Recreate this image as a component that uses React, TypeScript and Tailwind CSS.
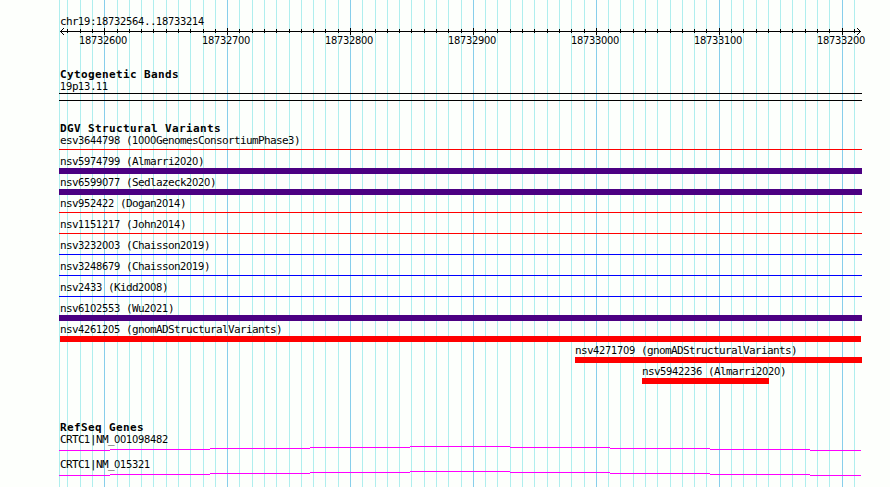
import React from "react";

const START = 18732564;
const END = 18733214;
const SCALE = 800 / 651;
const toX = (bp: number) => Math.round(60 + (bp - START) * SCALE);

const positions: number[] = [];
for (let bp = 18732570; bp <= END; bp += 10) positions.push(bp);
const isMajor = (bp: number) => bp % 100 === 0;

/** Fixed-pitch label: six pixels per character, digits in an undotted face. */
function Label({ text }: { text: string }) {
  return (
    <div className="h-3 whitespace-pre font-['DejaVu_Sans_Mono',monospace] text-[11px] leading-[14px] tracking-[-0.622px] text-black">
      {text.split(/(\d+)/).map((part, i) =>
        /\d/.test(part) ? (
          <span key={i} className="font-['DejaVu_Sans_Condensed','DejaVu_Sans',sans-serif] font-stretch-semi-condensed tracking-[-0.3px]">
            {part}
          </span>
        ) : (
          part
        ),
      )}
    </div>
  );
}

function Heading({ children }: { children: string }) {
  return (
    <h2 className="h-[13px] whitespace-pre pl-px font-['DejaVu_Sans_Mono',monospace] text-[11px] font-bold leading-[13px] tracking-[0.378px] text-black">
      {children}
    </h2>
  );
}

function Grid() {
  return (
    <svg className="absolute inset-0" width="890" height="487" shapeRendering="crispEdges">
      <rect x="59" y="0" width="1" height="487" fill="#afeeee" />
      {positions.map((bp) => (
        <rect key={bp} x={toX(bp)} y="0" width="1" height="487" fill={isMajor(bp) ? "#87ceeb" : "#afeeee"} />
      ))}
    </svg>
  );
}

function Ruler() {
  return (
    <svg className="mt-px block" width="804" height="8" viewBox="59 28 804 8" shapeRendering="crispEdges">
      <rect x="60" y="31" width="801" height="1" />
      {[1, 2, 3].map((d) => (
        <g key={d}>
          <rect x={60 + d} y={31 - d} width="1" height="1" />
          <rect x={60 + d} y={31 + d} width="1" height="1" />
          <rect x={860 - d} y={31 - d} width="1" height="1" />
          <rect x={860 - d} y={31 + d} width="1" height="1" />
        </g>
      ))}
      {positions.map((bp) => (
        <rect key={bp} x={toX(bp)} y={isMajor(bp) ? 28 : 29} width="1" height={isMajor(bp) ? 7 : 4} />
      ))}
    </svg>
  );
}

type Variant = { name: string; glyph: string; indent?: string };

const variants: Variant[] = [
  { name: "esv3644798 (1000GenomesConsortiumPhase3)", glyph: "mt-[3px] h-px w-[803px] bg-[#ff0000]" },
  { name: "nsv5974799 (Almarri2020)", glyph: "mt-px h-[6px] w-[803px] bg-[#4b0082]" },
  { name: "nsv6599077 (Sedlazeck2020)", glyph: "mt-px h-[6px] w-[803px] bg-[#4b0082]" },
  { name: "nsv952422 (Dogan2014)", glyph: "mt-[3px] h-px w-[803px] bg-[#ff0000]" },
  { name: "nsv1151217 (John2014)", glyph: "mt-[3px] h-px w-[803px] bg-[#ff0000]" },
  { name: "nsv3232003 (Chaisson2019)", glyph: "mt-[3px] h-px w-[803px] bg-[#0000ff]" },
  { name: "nsv3248679 (Chaisson2019)", glyph: "mt-[3px] h-px w-[803px] bg-[#0000ff]" },
  { name: "nsv2433 (Kidd2008)", glyph: "mt-[3px] h-px w-[803px] bg-[#0000ff]" },
  { name: "nsv6102553 (Wu2021)", glyph: "mt-px h-[6px] w-[803px] bg-[#4b0082]" },
  { name: "nsv4261205 (gnomADStructuralVariants)", glyph: "ml-px mt-px h-[6px] w-[801px] bg-[#ff0000]" },
  { name: "nsv4271709 (gnomADStructuralVariants)", glyph: "ml-px mt-px h-[6px] w-[287px] bg-[#ff0000]", indent: "ml-[515px]" },
  { name: "nsv5942236 (Almarri2020)", glyph: "ml-px mt-px h-[6px] w-[127px] bg-[#ff0000]", indent: "ml-[582px]" },
];

const intron = [
  [59, 110, 4],
  [110, 210, 3],
  [210, 310, 2],
  [310, 410, 1],
  [410, 510, 0],
  [510, 610, 1],
  [610, 710, 2],
  [710, 810, 3],
  [810, 861, 4],
];

function Gene({ name }: { name: string }) {
  return (
    <div className="h-[25px]">
      <div className="pl-px">
        <Label text={name} />
      </div>
      <svg className="mt-px block" width="803" height="5" viewBox="59 0 803 5" shapeRendering="crispEdges">
        {intron.map(([from, to, y]) => (
          <rect key={from} x={from} y={y} width={to - from} height="1" fill="#ff00ff" />
        ))}
      </svg>
    </div>
  );
}

export default function App() {
  return (
    <div className="relative h-[487px] w-[890px] overflow-hidden bg-[#fdfffc]">
      <Grid />
      <main className="relative flex flex-col pl-[59px] pt-[15px]">
        <div className="h-3 pl-px">
          <Label text="chr19:18732564..18733214" />
        </div>
        <Ruler />
        <div className="-mt-0.5 flex h-3 gap-[75px] pl-[20px]">
          {positions.filter(isMajor).map((bp) => (
            <div key={bp} className="w-12 shrink-0">
              <Label text={String(bp)} />
            </div>
          ))}
        </div>

        <section className="mt-[22px] h-[54px]">
          <Heading>Cytogenetic Bands</Heading>
          <div className="-mt-px pl-px">
            <Label text="19p13.11" />
          </div>
          <div className="mt-px h-2 w-[803px] border-y border-black" />
        </section>

        <section className="h-[299px]">
          <Heading>DGV Structural Variants</Heading>
          {variants.map((v, i) => (
            <div key={v.name} className={`h-[21px] ${i === 0 ? "-mt-px" : ""} ${v.indent ?? ""}`}>
              <div className="pl-px">
                <Label text={v.name} />
              </div>
              <div className="flow-root">
                <div className={v.glyph} />
              </div>
            </div>
          ))}
        </section>

        <section>
          <Heading>RefSeq Genes</Heading>
          <div className="-mt-px">
            <Gene name="CRTC1|NM_001098482" />
            <Gene name="CRTC1|NM_015321" />
          </div>
        </section>
      </main>
    </div>
  );
}
